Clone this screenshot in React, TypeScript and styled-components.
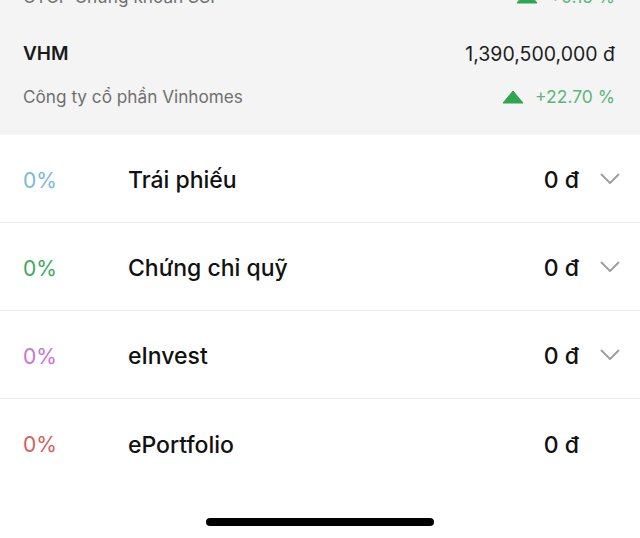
import React from "react";
import styled, { createGlobalStyle } from "styled-components";

const Global = createGlobalStyle`
  html, body { margin: 0; padding: 0; background: #ffffff; }
  body { font-family: "Inter", "Noto Sans", "DejaVu Sans", sans-serif; overflow: hidden; }
`;

const Page = styled.div`
  width: 640px;
  height: 538px;
  overflow: hidden;
  display: flex;
  flex-direction: column;
  background: #ffffff;
  position: relative;
`;

const Holdings = styled.section`
  background: #f4f4f4;
  margin-top: -65px;
  display: flex;
  flex-direction: column;
`;

const Holding = styled.div`
  display: grid;
  grid-template-columns: 1fr auto;
  row-gap: 20px;
  padding: 7px 25px 27px 23px;
`;

const Ticker = styled.div`
  font-size: 19px;
  line-height: 24px;
  font-weight: 600;
  color: #1a1a1a;
`;

const Price = styled.div`
  font-size: 19.5px;
  line-height: 24px;
  color: #1e1e1e;
  text-align: right;
`;

const Company = styled.div`
  font-size: 17.2px;
  line-height: 22px;
  color: #707070;
`;

const Change = styled.div`
  display: flex;
  align-items: center;
  justify-content: flex-end;
  gap: 11px;
  font-size: 17.5px;
  line-height: 22px;
  color: #5db67b;
`;

const Category = styled.div<{ $last?: boolean }>`
  height: 88px;
  box-sizing: border-box;
  display: flex;
  align-items: center;
  padding: 3px 20px 0 23px;
  border-bottom: ${(p) => (p.$last ? "none" : "1px solid #ededed")};
`;

const Percent = styled.div<{ $color: string }>`
  width: 105px;
  font-size: 21px;
  color: ${(p) => p.$color};
`;

const Name = styled.div`
  flex: 1;
  font-size: 23px;
  font-weight: 500;
  color: #111111;
`;

const Amount = styled.div`
  font-size: 23px;
  font-weight: 500;
  color: #111111;
`;

const Chevron = styled.div`
  width: 20px;
  height: 12px;
  margin-left: 21px;
  margin-top: -3px;
  display: flex;
  align-items: center;
  justify-content: center;
`;

const HomeBar = styled.div`
  position: absolute;
  left: 206px;
  bottom: 12px;
  width: 228px;
  height: 8px;
  border-radius: 4px;
  background: #000000;
`;

const ChevronIcon = () => (
  <svg width="20" height="12" viewBox="0 0 20 12">
    <path d="M1.5 1.5 L10 10 L18.5 1.5" fill="none" stroke="#a0a0a0" strokeWidth="2" strokeLinecap="round" strokeLinejoin="round" />
  </svg>
);

const UpTriangle = ({ color }: { color: string }) => (
  <svg width="22" height="14" viewBox="0 0 22 14">
    <path d="M11 1 L21 13 L1 13 Z" fill={color} stroke={color} strokeWidth="1" strokeLinejoin="round" />
  </svg>
);

const holdings = [
  { ticker: "SSI", price: "28,650,000 đ", company: "CTCP Chứng khoán SSI", change: "+0.15 %" },
  { ticker: "VHM", price: "1,390,500,000 đ", company: "Công ty cổ phần Vinhomes", change: "+22.70 %" },
];

const categories = [
  { pct: "0%", color: "#7db6e0", name: "Trái phiếu", amount: "0 đ", chevron: true },
  { pct: "0%", color: "#3ea85c", name: "Chứng chỉ quỹ", amount: "0 đ", chevron: true },
  { pct: "0%", color: "#c972d8", name: "eInvest", amount: "0 đ", chevron: true },
  { pct: "0%", color: "#d4605c", name: "ePortfolio", amount: "0 đ", chevron: false },
];

export default function App() {
  return (
    <Page>
      <Global />
      <Holdings>
        {holdings.map((h) => (
          <Holding key={h.ticker}>
            <Ticker>{h.ticker}</Ticker>
            <Price>{h.price}</Price>
            <Company>{h.company}</Company>
            <Change>
              <UpTriangle color="#2fa552" />
              {h.change}
            </Change>
          </Holding>
        ))}
      </Holdings>
      {categories.map((c, i) => (
        <Category key={c.name} $last={i === categories.length - 1}>
          <Percent $color={c.color}>{c.pct}</Percent>
          <Name>{c.name}</Name>
          <Amount>{c.amount}</Amount>
          <Chevron>{c.chevron ? <ChevronIcon /> : null}</Chevron>
        </Category>
      ))}
      <HomeBar />
    </Page>
  );
}
